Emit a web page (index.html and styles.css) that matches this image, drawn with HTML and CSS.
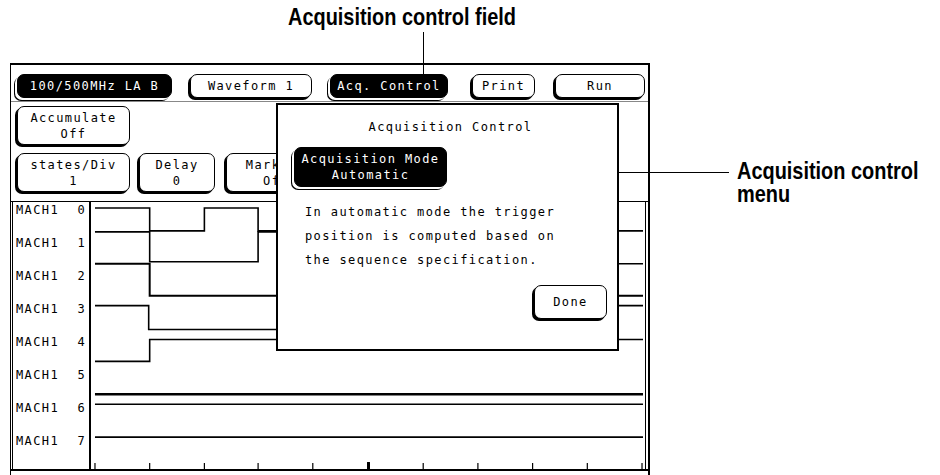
FILE: index.html
```html
<!DOCTYPE html>
<html lang="en">
<head>
<meta charset="UTF-8">
<meta name="viewport" content="width=device-width, initial-scale=1.0">
<title>Acquisition Control</title>
<link rel="stylesheet" href="styles.css">
</head>
<body>
<div class="page">
  <div class="callout-top">Acquisition control field</div>
  <div class="leader-v"></div>
  <div class="leader-h"></div>
  <div class="callout-right">Acquisition control<br>menu</div>

  <div class="screen">
    <div class="toolbar">
      <div class="btn dark w-mod">100/500MHz LA B</div>
      <div class="btn w-wave">Waveform 1</div>
      <div class="btn dark w-acq">Acq. Control</div>
      <div class="btn w-print">Print</div>
      <div class="btn w-run">Run</div>
    </div>

    <div class="controls">
      <div class="ctrl-row">
        <div class="btn tall w-ctl">Accumulate<br>Off</div>
      </div>
      <div class="ctrl-row">
        <div class="btn tall w-ctl">states/Div<br>1</div>
        <div class="btn tall w-delay">Delay<br>0</div>
        <div class="btn tall w-mark">Markers<br>Off</div>
      </div>
    </div>

    <div class="wave">
      <div class="labels">
        <div class="lbl"><span>MACH1</span><span>0</span></div>
        <div class="lbl"><span>MACH1</span><span>1</span></div>
        <div class="lbl"><span>MACH1</span><span>2</span></div>
        <div class="lbl"><span>MACH1</span><span>3</span></div>
        <div class="lbl"><span>MACH1</span><span>4</span></div>
        <div class="lbl"><span>MACH1</span><span>5</span></div>
        <div class="lbl"><span>MACH1</span><span>6</span></div>
        <div class="lbl"><span>MACH1</span><span>7</span></div>
      </div>
      <svg class="traces" viewBox="88 203 557 268" preserveAspectRatio="none">
        <g fill="none" stroke="#000" stroke-width="1.6">
          <path d="M92 209 H147 V232 H202 V209 H256 V232 H643"/>
          <path d="M92 233 H147 V263 H256 V233 H300 V265 H643"/>
          <path d="M92 265 H147 V297 H643" stroke-width="2"/>
          <path d="M92 307 H146 V331 H300 V307 H643"/>
          <path d="M92 363 H147 V341 H643"/>
          <path d="M92 396 H643" stroke-width="2.6"/>
          <path d="M92 406 H643" stroke-width="1.3"/>
          <path d="M92 439 H643" stroke-width="1.8"/>
        </g>
        <g stroke="#000" stroke-width="1.2">
          <path d="M92 465 V471 M147 465 V471 M202 465 V471 M256 465 V471 M311 465 V471 M422 465 V471 M477 465 V471 M532 465 V471 M587 465 V471 M642 465 V471"/>
          <path d="M367 464 V471" stroke-width="3"/>
        </g>
      </svg>
    </div>

    <div class="menu">
      <div class="menu-title">Acquisition Control</div>
      <div class="btn dark tall w-mode">Acquisition Mode<br>Automatic</div>
      <p class="menu-text">In automatic mode the trigger<br>position is computed based on<br>the sequence specification.</p>
      <div class="menu-foot">
        <div class="btn w-done">Done</div>
      </div>
    </div>
  </div>
</div>
</body>
</html>
```

FILE: styles.css
```css
body {
  margin: 0;
  background-color: #fff;
  color: #000;
}
.page {
  position: relative;
  width: 940px;
  height: 475px;
  overflow: hidden;
}
/* callouts use a squeezed Arial-width bold to mimic a condensed face */
.callout-top, .callout-right {
  font-family: "Liberation Sans", Arial, sans-serif;
  font-weight: bold;
  font-size: 24px;
  width: max-content;
  transform-origin: 0 0;
  transform: scaleX(0.83);
}
.callout-top {
  height: 63px;
  box-sizing: border-box;
  margin-left: 288px;
  padding-top: 4px;
  line-height: 26px;
}
.callout-right {
  position: absolute;
  left: 737px;
  top: 159px;
  line-height: 23px;
}
.leader-v {
  position: absolute;
  left: 423px;
  top: 32px;
  width: 1px;
  height: 44px;
  background-color: #000;
  z-index: 3;
}
.leader-h {
  position: absolute;
  left: 619px;
  top: 172px;
  width: 110px;
  height: 1px;
  background-color: #000;
}

/* analyzer screen */
.screen {
  position: relative;
  margin-left: 10px;
  width: 640px;
  height: 420px;
  box-sizing: border-box;
  border-top: 2px solid #000;
  border-left: 1px solid #000;
  border-right: 2px solid #000;
  font-family: "DejaVu Sans Mono", monospace;
  font-size: 12px;
  letter-spacing: 1.4px;
}
.toolbar {
  display: flex;
  gap: 18px;
  height: 37px;
  padding: 9px 0 0 6px;
  box-sizing: border-box;
  border-bottom: 1px solid #888;
}
.btn {
  height: 24px;
  box-sizing: border-box;
  border: 1px solid #000;
  border-radius: 7px;
  box-shadow: -2px 2px 0 #000;
  background-color: #fff;
  display: flex;
  align-items: center;
  justify-content: center;
  text-align: center;
  line-height: 16px;
  white-space: nowrap;
}
.btn.dark {
  background-color: #000;
  color: #fff;
  box-shadow: -2px 2px 0 #fff, -3px 3px 0 #000;
}
.btn.tall {
  height: 40px;
}
.w-mod { width: 155px; }
.w-wave { width: 122px; }
.w-acq { width: 118px; }
.w-print { width: 63px; margin-left: 6px; }
.w-run { width: 90px; margin-left: 2px; }
.w-ctl { width: 113px; }
.w-delay { width: 76px; }
.w-mark { width: 100px; margin-left: 2px; }
.w-mode { width: 153px; }
.w-done { width: 73px; height: 34px; }

.controls {
  display: flex;
  flex-direction: column;
  gap: 8px;
  padding: 4px 0 0 6px;
  height: 99px;
  box-sizing: border-box;
}
.controls .btn.tall {
  height: 39px;
}
.ctrl-row {
  display: flex;
  gap: 7px;
}
.ctrl-row + .ctrl-row {
  gap: 9px;
}

.wave {
  display: flex;
  height: 270px;
  box-sizing: border-box;
  border-top: 1px solid #000;
  border-bottom: 2px solid #000;
}
.labels {
  width: 76px;
  margin-left: 1px;
  border-left: 1px solid #000;
  border-right: 2px solid #000;
  padding-top: 1px;
}
.lbl {
  display: flex;
  justify-content: space-between;
  height: 33px;
  line-height: 14px;
  padding: 0 3px 0 3px;
}
.traces {
  flex: 1;
  height: 267px;
  border-right: 1px solid #000;
  margin-right: 2px;
}

/* acquisition control menu */
.menu {
  position: absolute;
  left: 265px;
  top: 38px;
  width: 343px;
  height: 248px;
  box-sizing: border-box;
  border: 2px solid #000;
  background-color: #fff;
  display: flex;
  flex-direction: column;
  padding: 14px 10px 8px 16px;
  z-index: 2;
}
.menu-title {
  text-align: center;
  line-height: 16px;
  margin-bottom: 12px;
}
.menu-text {
  margin: 13px 0 0 11px;
  line-height: 24px;
}
.menu-foot {
  display: flex;
  justify-content: flex-end;
  margin-top: 13px;
}
```
